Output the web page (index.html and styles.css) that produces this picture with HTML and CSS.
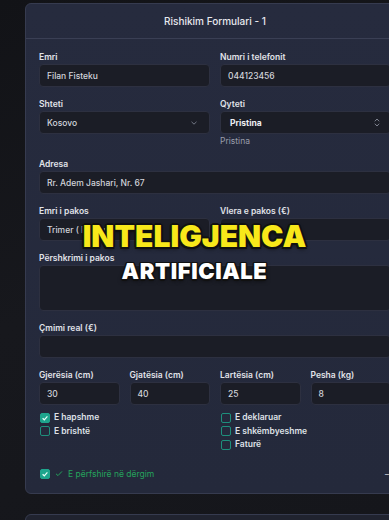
FILE: index.html
```html
<!DOCTYPE html>
<html lang="sq">
<head>
<meta charset="utf-8">
<title>Rishikim Formulari</title>
<link rel="stylesheet" href="styles.css">
</head>
<body>
<div class="page">
  <div class="card">
    <div class="card-head">Rishikim Formulari - 1</div>
    <div class="card-body">
      <div class="grid2">
        <div class="field">
          <div class="label">Emri</div>
          <div class="input">Filan Fisteku</div>
        </div>
        <div class="field">
          <div class="label">Numri i telefonit</div>
          <div class="input">044123456</div>
        </div>
        <div class="field">
          <div class="label">Shteti</div>
          <div class="input select">
            <span>Kosovo</span>
            <svg class="chev" width="6" height="4" viewBox="0 0 6 4"><path d="M0.5 0.8 L3 3.2 L5.5 0.8" fill="none" stroke="#7e8290" stroke-width="0.9"/></svg>
          </div>
        </div>
        <div class="field">
          <div class="label">Qyteti</div>
          <div class="input select strong">
            <span>Pristina</span>
            <svg class="updown" width="6" height="9" viewBox="0 0 6 9"><path d="M0.8 3.3 L3 1 L5.2 3.3 M0.8 5.7 L3 8 L5.2 5.7" fill="none" stroke="#8a8e9c" stroke-width="0.9"/></svg>
          </div>
          <div class="helper">Pristina</div>
        </div>
      </div>
      <div class="field">
        <div class="label">Adresa</div>
        <div class="input">Rr. Adem Jashari, Nr. 67</div>
      </div>
      <div class="grid2">
        <div class="field">
          <div class="label">Emri i pakos</div>
          <div class="input">Trimer ( Philips )</div>
        </div>
        <div class="field">
          <div class="label">Vlera e pakos (€)</div>
          <div class="input">25</div>
        </div>
      </div>
      <div class="field">
        <div class="label">Përshkrimi i pakos</div>
        <div class="input textarea"></div>
      </div>
      <div class="field">
        <div class="label">Çmimi real (€)</div>
        <div class="input"></div>
      </div>
      <div class="grid4">
        <div class="field">
          <div class="label">Gjerësia (cm)</div>
          <div class="input">30</div>
        </div>
        <div class="field">
          <div class="label">Gjatësia (cm)</div>
          <div class="input">40</div>
        </div>
        <div class="field">
          <div class="label">Lartësia (cm)</div>
          <div class="input">25</div>
        </div>
        <div class="field">
          <div class="label">Pesha (kg)</div>
          <div class="input">8</div>
        </div>
      </div>
      <div class="checks">
        <div class="check-col">
          <div class="check"><span class="box on"><svg width="8" height="8" viewBox="0 0 8 8"><path d="M1.6 4.2 L3.3 5.8 L6.4 2.3" fill="none" stroke="#e8fff9" stroke-width="1.2"/></svg></span>E hapshme</div>
          <div class="check"><span class="box"></span>E brishtë</div>
        </div>
        <div class="check-col">
          <div class="check"><span class="box"></span>E deklaruar</div>
          <div class="check"><span class="box"></span>E shkëmbyeshme</div>
          <div class="check"><span class="box"></span>Faturë</div>
        </div>
      </div>
      <div class="included">
        <span class="box on"><svg width="8" height="8" viewBox="0 0 8 8"><path d="M1.6 4.2 L3.3 5.8 L6.4 2.3" fill="none" stroke="#e8fff9" stroke-width="1.2"/></svg></span>
        <svg class="tick" width="8" height="7" viewBox="0 0 8 7"><path d="M1 3.8 L3 5.6 L7 1.4" fill="none" stroke="#23a05a" stroke-width="1"/></svg>
        <span class="inc-text">E përfshirë në dërgim</span>
        <span class="remove">−</span>
      </div>
    </div>
  </div>
  <div class="card card-next"></div>
</div>
<div class="overlay">
  <div class="ov1">INTELIGJENCA</div>
  <div class="ov2">ARTIFICIALE</div>
</div>
</body>
</html>
```

FILE: styles.css
```css
html, body {
  margin: 0;
  padding: 0;
  overflow: hidden;
  width: 389px;
  height: 520px;
}
body {
  background: linear-gradient(160deg, #121317 0%, #17181d 50%, #15161b 100%);
  font-family: Inter, "Noto Sans", sans-serif;
  color: #e2e4ea;
  position: relative;
}
.page {
  padding: 3px 0 0 25px;
  display: flex;
  flex-direction: column;
  gap: 20px;
}
.card {
  width: 380px;
  flex: none;
  box-sizing: border-box;
  background: linear-gradient(180deg, #262b3e 0%, #24293b 100%);
  border: 1px solid #363b4f;
  border-radius: 6px;
}
.card-head {
  height: 34px;
  display: flex;
  align-items: center;
  justify-content: center;
  font-size: 10px;
  font-weight: 500;
  color: #e6e8ee;
  border-bottom: 1px solid #3a3f54;
}
.card-body {
  padding: 12px 13px 12px 13px;
  display: flex;
  flex-direction: column;
  gap: 11px;
}
.grid2 {
  display: grid;
  grid-template-columns: 1fr 1fr;
  column-gap: 10px;
  row-gap: 11px;
  align-items: start;
}
.grid4 {
  display: grid;
  grid-template-columns: repeat(4, 1fr);
  column-gap: 10px;
}
.field {
  display: flex;
  flex-direction: column;
  min-width: 0;
}
.label {
  font-size: 8.5px;
  line-height: 12px;
  font-weight: 600;
  color: #e1e3e9;
  margin-bottom: 1px;
  white-space: nowrap;
}
.input {
  box-sizing: border-box;
  height: 23px;
  background: #1b1d26;
  border: 1px solid #2d3040;
  border-radius: 4px;
  padding: 0 7px;
  display: flex;
  align-items: center;
  font-size: 8.5px;
  font-weight: 500;
  color: #d2d4db;
  white-space: nowrap;
  overflow: hidden;
}
.select {
  justify-content: space-between;
}
.select .chev {
  margin-right: 5px;
}
.strong {
  padding-left: 9px;
  font-weight: 700;
  color: #eceef3;
}
.updown {
  margin-right: 3px;
}
.helper {
  margin-top: 1px;
  font-size: 8.5px;
  line-height: 12px;
  color: #9a9eab;
}
.textarea {
  height: 46px;
}
.checks {
  display: grid;
  grid-template-columns: 1fr 1fr;
  column-gap: 10px;
  margin-top: -5px;
}
.check-col {
  display: flex;
  flex-direction: column;
}
.check {
  display: flex;
  align-items: center;
  height: 13.5px;
  line-height: 13.5px;
  font-size: 8.5px;
  font-weight: 600;
  color: #dfe1e7;
  white-space: nowrap;
}
.box {
  box-sizing: border-box;
  width: 10px;
  height: 10px;
  flex: none;
  border: 1px solid #1e8f7c;
  border-radius: 2px;
  margin: 0 4px 0 1px;
  display: flex;
  align-items: center;
  justify-content: center;
}
.box.on {
  background: #1ea58d;
  border-color: #1ea58d;
}
.included {
  display: flex;
  align-items: center;
  height: 14px;
  margin-top: 4px;
  font-size: 8.5px;
  color: #24a35c;
  white-space: nowrap;
}
.included .box {
  margin-right: 5px;
}
.tick {
  margin-right: 5px;
}
.remove {
  margin-left: auto;
  color: #c9ccd4;
  font-size: 9px;
  margin-right: 1px;
}
.card-next {
  height: 40px;
  background: #20232f;
}
.overlay {
  position: absolute;
  left: 0;
  right: 0;
  top: 218px;
  display: flex;
  flex-direction: column;
  align-items: center;
  font-family: Inter, "Noto Sans", sans-serif;
  font-weight: 900;
  pointer-events: none;
}
.ov1 {
  font-size: 30px;
  line-height: 36px;
  color: #f8e81a;
  letter-spacing: 0;
  text-shadow: 2px 0 0 #111, -2px 0 0 #111, 0 2px 0 #111, 0 -2px 0 #111, 1.5px 1.5px 0 #111, -1.5px 1.5px 0 #111, 1.5px -1.5px 0 #111, -1.5px -1.5px 0 #111, 0 2px 4px rgba(0,0,0,0.6);
}
.ov2 {
  font-size: 22px;
  line-height: 26px;
  margin-top: 4px;
  color: #ffffff;
  letter-spacing: 0.6px;
  text-shadow: 1.5px 0 0 #111, -1.5px 0 0 #111, 0 1.5px 0 #111, 0 -1.5px 0 #111, 1px 1px 0 #111, -1px 1px 0 #111, 1px -1px 0 #111, -1px -1px 0 #111, 0 2px 4px rgba(0,0,0,0.6);
}
```
